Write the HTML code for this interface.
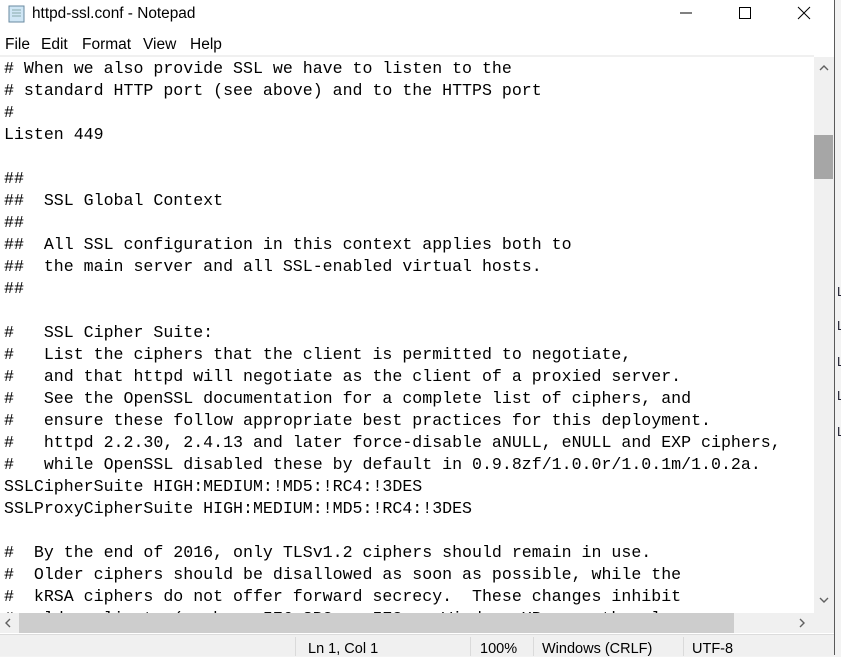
<!DOCTYPE html>
<html><head><style>
body{margin:0;width:841px;height:655px;overflow:hidden;background:#f3f3f3;position:relative;font-family:"Liberation Sans",sans-serif}
.win{position:absolute;left:0;top:0;width:834px;height:655px;background:#fff;border-right:1px solid #5a5a5a}
.title{position:absolute;left:32px;top:5px;font-size:15.4px;color:#000}
.menu{position:absolute;top:36px;left:0;font-size:15.5px;color:#000}
.menu span{position:absolute;top:0}
.edit{position:absolute;left:0;top:55px;width:814px;height:558px;border-top:2px solid #f0f0f0;overflow:hidden;background:#fff}
pre{margin:0;position:absolute;left:4px;top:1px;font-family:"Liberation Mono",monospace;font-size:16.6px;line-height:22px;color:#000}
.vs{position:absolute;left:814px;top:57px;width:20px;height:556px;background:#f0f0f0}
.hs{position:absolute;left:0;top:613px;width:834px;height:20px;background:#f0f0f0}
.status{position:absolute;left:0;top:634px;width:834px;height:21px;background:#f0f0f0;border-top:1px solid #dcdcdc;font-size:14.5px}
.sep{position:absolute;top:2px;width:1px;height:19px;background:#dadada}
.st{position:absolute;top:6px}
</style></head><body>
<div style="position:absolute;left:835px;top:280px;font-size:13px;color:#223">
<div style="position:absolute;top:4px;left:2px">L</div><div style="position:absolute;top:38px;left:2px">L</div><div style="position:absolute;top:74px;left:2px">L</div><div style="position:absolute;top:108px;left:2px">L</div><div style="position:absolute;top:144px;left:2px">L</div></div>
<div class="win">
<svg style="position:absolute;left:7px;top:4px" width="20" height="20"><rect x="2" y="2" width="15" height="16" fill="#cfe6f5" stroke="#6a8aa0"/><path d="M5 6h9M5 9h9M5 12h9" stroke="#8aa" /></svg>
<div class="title">httpd-ssl.conf - Notepad</div>
<svg style="position:absolute;left:680px;top:5px" width="140" height="18"><path d="M0 8h12" stroke="#000"/><rect x="59.5" y="2.5" width="11" height="11" fill="none" stroke="#000"/><path d="M118 2l12 12M130 2l-12 12" stroke="#000"/></svg>
<div class="menu"><span style="left:5px">File</span><span style="left:41px">Edit</span><span style="left:82px">Format</span><span style="left:143px">View</span><span style="left:190px">Help</span></div>
<div class="edit"><pre># When we also provide SSL we have to listen to the
# standard HTTP port (see above) and to the HTTPS port
#
Listen 449

##
##  SSL Global Context
##
##  All SSL configuration in this context applies both to
##  the main server and all SSL-enabled virtual hosts.
##

#   SSL Cipher Suite:
#   List the ciphers that the client is permitted to negotiate,
#   and that httpd will negotiate as the client of a proxied server.
#   See the OpenSSL documentation for a complete list of ciphers, and
#   ensure these follow appropriate best practices for this deployment.
#   httpd 2.2.30, 2.4.13 and later force-disable aNULL, eNULL and EXP ciphers,
#   while OpenSSL disabled these by default in 0.9.8zf/1.0.0r/1.0.1m/1.0.2a.
SSLCipherSuite HIGH:MEDIUM:!MD5:!RC4:!3DES
SSLProxyCipherSuite HIGH:MEDIUM:!MD5:!RC4:!3DES

#  By the end of 2016, only TLSv1.2 ciphers should remain in use.
#  Older ciphers should be disallowed as soon as possible, while the
#  kRSA ciphers do not offer forward secrecy.  These changes inhibit
#  older clients (such as IE6 SP2 or IE8 on Windows XP, or other legacy</pre></div>
<div class="vs"><div style="position:absolute;top:78px;left:0;width:19px;height:44px;background:#a6a6a6"></div>
<svg style="position:absolute;left:5px;top:8px" width="10" height="8"><path d="M1 5l4-4 4 4" stroke="#606060" fill="none" stroke-width="1.4"/></svg>
<svg style="position:absolute;left:5px;top:539px" width="10" height="8"><path d="M1 2l4 4 4-4" stroke="#606060" fill="none" stroke-width="1.4"/></svg></div>
<div class="hs"><div style="position:absolute;left:19px;top:0;width:715px;height:20px;background:#cdcdcd"></div>
<svg style="position:absolute;left:4px;top:5px" width="10" height="10"><path d="M6 1l-4 4 4 4" stroke="#606060" fill="none" stroke-width="1.4"/></svg>
<svg style="position:absolute;left:797px;top:5px" width="10" height="10"><path d="M3 1l4 4-4 4" stroke="#606060" fill="none" stroke-width="1.4"/></svg></div>
<div class="status">
<div class="sep" style="left:295px"></div><div class="sep" style="left:470px"></div><div class="sep" style="left:533px"></div><div class="sep" style="left:683px"></div>
<div class="st" style="left:308px">Ln 1, Col 1</div><div class="st" style="left:480px">100%</div><div class="st" style="left:542px">Windows (CRLF)</div><div class="st" style="left:692px">UTF-8</div>
</div>
</div>
</body></html>
